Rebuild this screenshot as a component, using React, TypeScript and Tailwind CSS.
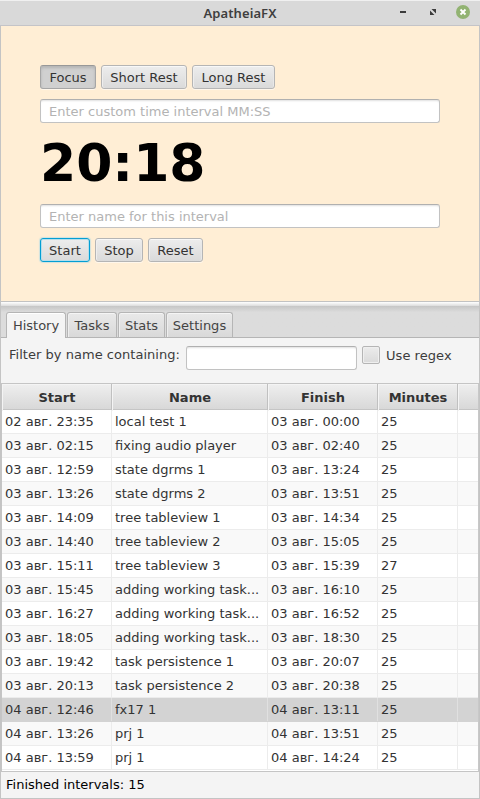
import React from "react";

const rows: [string, string, string, string][] = [
  ["02 авг. 23:35", "local test 1", "03 авг. 00:00", "25"],
  ["03 авг. 02:15", "fixing audio player", "03 авг. 02:40", "25"],
  ["03 авг. 12:59", "state dgrms 1", "03 авг. 13:24", "25"],
  ["03 авг. 13:26", "state dgrms 2", "03 авг. 13:51", "25"],
  ["03 авг. 14:09", "tree tableview 1", "03 авг. 14:34", "25"],
  ["03 авг. 14:40", "tree tableview 2", "03 авг. 15:05", "25"],
  ["03 авг. 15:11", "tree tableview 3", "03 авг. 15:39", "27"],
  ["03 авг. 15:45", "adding working task...", "03 авг. 16:10", "25"],
  ["03 авг. 16:27", "adding working task...", "03 авг. 16:52", "25"],
  ["03 авг. 18:05", "adding working task...", "03 авг. 18:30", "25"],
  ["03 авг. 19:42", "task persistence 1", "03 авг. 20:07", "25"],
  ["03 авг. 20:13", "task persistence 2", "03 авг. 20:38", "25"],
  ["04 авг. 12:46", "fx17 1", "04 авг. 13:11", "25"],
  ["04 авг. 13:26", "prj 1", "04 авг. 13:51", "25"],
  ["04 авг. 13:59", "prj 1", "04 авг. 14:24", "25"],
];

const selectedRow = 12;
const columnGrid = "grid grid-cols-[110px_156px_110px_80px_20px]";

type ButtonState = "normal" | "pressed" | "focused";

function Button({ label, width, state = "normal" }: { label: string; width: string; state?: ButtonState }) {
  const look = {
    normal:
      "border-[#b5b5b5] bg-linear-to-b from-[#ededed] to-[#dadada] shadow-[inset_0_1px_0_#f8f8f8,inset_1px_0_0_#eeeeee,inset_-1px_0_0_#e8e8e8,0_1px_0_#fff7ec]",
    pressed:
      "border-[#a6a6a6] border-t-[#989898] bg-[#d0d0d0] shadow-[inset_0_2px_3px_#b4b4b4,0_1px_0_#fff7ec]",
    focused:
      "border-[#039ed3] bg-linear-to-b from-[#ededed] to-[#dadada] shadow-[inset_0_0_0_1px_#b5deeb,0_0_1px_1px_#cfe2df]",
  }[state];
  return (
    <button className={`flex h-6 items-start justify-center rounded-[3px] border pt-px leading-[22px] whitespace-nowrap text-[#333333] ${width} ${look}`}>
      {label}
    </button>
  );
}

function Field({ placeholder, width }: { placeholder?: string; width: string }) {
  return (
    <input
      placeholder={placeholder}
      className={`block h-6 rounded-[3px] border border-[#c2c2c2] border-t-[#b0b0b0] bg-white px-2 leading-[22px] shadow-[inset_0_2px_2px_-1px_#e0e0e0] outline-none placeholder:text-[#b3b3b3] ${width}`}
    />
  );
}

function Tab({ label, width, active = false }: { label: string; width: string; active?: boolean }) {
  return (
    <div
      className={`rounded-t-[3px] border border-b-0 border-[#b5b5b5] text-center leading-[25px] text-[#444444] ${width} ${
        active
          ? "h-[26px] bg-[#f4f4f4] shadow-[inset_0_1px_0_#ffffff]"
          : "h-[25px] bg-linear-to-b from-[#e9e9e9] to-[#d9d9d9] shadow-[inset_0_1px_0_#f5f5f5,inset_1px_0_0_#eeeeee]"
      }`}
    >
      {label}
    </div>
  );
}

function TitleBar() {
  return (
    <header className="grid h-[26px] shrink-0 grid-cols-[1fr_auto_1fr] border-t border-b border-t-[#f0f0f0] border-b-[#c4c4c8] bg-[#d9d9d9]">
      <div />
      <h1 className="pt-[2px] font-['Noto_Sans',sans-serif] text-[13px] leading-[20px] font-semibold tracking-[0.1px] text-[#3f3f3f]">ApatheiaFX</h1>
      <div className="flex items-start justify-end pr-[9px]">
        <svg width="74" height="24" viewBox="397 1 74 24" aria-hidden="true">
          <rect x="400" y="11" width="6" height="2" fill="#3c3c3c" />
          <path d="M431.500 9h4.500v4.500zM430 10.500v4.500h4.500z" fill="#3c3c3c" />
          <circle cx="463" cy="12" r="7" fill="#92b372" />
          <path d="M460.5 9.500l5 5M465.500 9.500l-5 5" stroke="#ffffff" strokeWidth="1.9" />
        </svg>
      </div>
    </header>
  );
}

export default function App() {
  return (
    <div className="flex h-[799px] w-[480px] flex-col overflow-hidden bg-[#f4f4f4] font-['DejaVu_Sans',sans-serif] text-[13px] text-[#333333]">
      <TitleBar />
      <div className="flex min-h-0 flex-1 flex-col border-x border-b border-[#c4c4c4]">
        <section className="flex h-[275px] shrink-0 flex-col gap-[10px] bg-[#ffeed5] px-[39px] pt-[39px]">
          <div className="flex gap-[5px]">
            <Button label="Focus" width="w-[56px]" state="pressed" />
            <Button label="Short Rest" width="w-[86px]" />
            <Button label="Long Rest" width="w-[83px]" />
          </div>
          <Field placeholder="Enter custom time interval MM:SS" width="w-full" />
          <div className="h-[61px] text-[52px] leading-[61px] font-bold text-black">20:18</div>
          <Field placeholder="Enter name for this interval" width="w-full" />
          <div className="flex gap-[5px]">
            <Button label="Start" width="w-[50px]" state="focused" />
            <Button label="Stop" width="w-[48px]" />
            <Button label="Reset" width="w-[55px]" />
          </div>
        </section>

        <div className="h-[5px] shrink-0 border-t border-[#c2c2c2] bg-linear-to-b from-white to-[#dcdcdc]" />

        <nav className="h-8 shrink-0 border-b border-[#b5b5b5] bg-linear-to-b from-[#c6c6c6] via-[#dcdcdc] via-20% to-[#dcdcdc] pt-[6px] pl-[5px]">
          <div className="flex gap-px">
            <Tab label="History" width="w-[60px]" active />
            <Tab label="Tasks" width="w-[50px]" />
            <Tab label="Stats" width="w-[47px]" />
            <Tab label="Settings" width="w-[67px]" />
          </div>
        </nav>

        <div className="flex h-[45px] shrink-0 items-start pt-[8px] pl-2 text-[#3c3c3c]">
          <span className="w-[177px] leading-[18px] tracking-[0.03px] whitespace-nowrap">Filter by name containing:</span>
          <Field width="w-[171px]" />
          <span className="mr-[6px] ml-[5px] size-[18px] rounded-[2px] border border-[#b5b5b5] bg-linear-to-b from-[#ececec] to-[#dadada] shadow-[inset_0_0_0_1px_#efefef]" />
          <span className="leading-[20px] tracking-[0.05px]">Use regex</span>
        </div>

        <main className="h-[389px] shrink-0 overflow-hidden border border-[#c5c5c5] border-r-[#c8c8c8] bg-white">
          <div className={`${columnGrid} h-[26px] border-b border-[#c5c5c5] bg-linear-to-b from-[#efefef] to-[#d8d8d8] text-center leading-[26px] font-bold`}>
            {["Start", "Name", "Finish", "Minutes", ""].map((name, i) => (
              <div key={i} className="border-r border-[#c0c0c0] pt-px pl-px shadow-[inset_1px_1px_0_#f4f4f4] last:border-r-0">
                {name}
              </div>
            ))}
          </div>
          {rows.map((row, i) => (
            <div
              key={i}
              className={`${columnGrid} h-6 border-b ${
                i === selectedRow ? "border-[#d3d3d3] bg-[#d3d3d3]" : i % 2 ? "border-[#ececec] bg-[#f9f9f9]" : "border-[#ececec] bg-white"
              }`}
            >
              {[...row, ""].map((cell, j) => (
                <div
                  key={j}
                  className={`overflow-hidden border-r pl-[3px] leading-[24px] whitespace-nowrap last:border-r-0 ${
                    i === selectedRow ? "border-[#e0e0e0]" : "border-[#ececec]"
                  }`}
                >
                  {cell}
                </div>
              ))}
            </div>
          ))}
        </main>

        <footer className="flex-1 pl-[5px] leading-[26px] text-black">Finished intervals: 15</footer>
      </div>
    </div>
  );
}
